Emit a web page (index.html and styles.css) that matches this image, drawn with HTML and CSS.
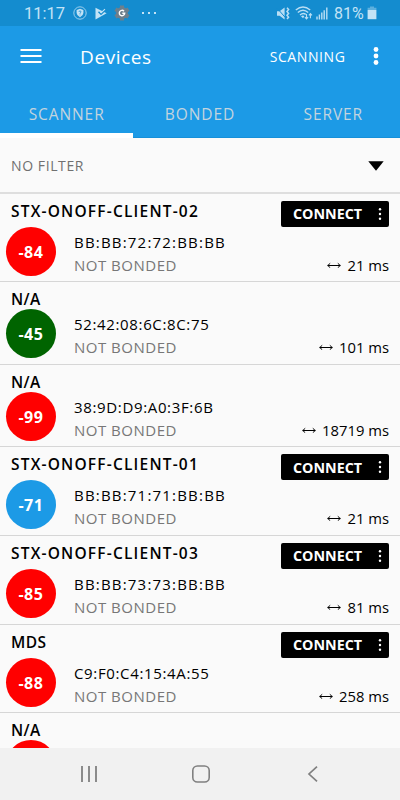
FILE: index.html
```html
<!DOCTYPE html>
<html lang="en">
<head>
  <meta charset="UTF-8" />
  <meta name="viewport" content="width=device-width, initial-scale=1.0"/>
  <title>Devices</title>
  <link rel="stylesheet" href="styles.css">
</head>
<body>
  <div class="status-bar">
    <span class="clock">11:17</span>
    <svg class="icon-shield" width="14" height="14" viewBox="0 0 14 14">
      <circle cx="7" cy="7" r="6.2" fill="none" stroke="#a9d6f1" stroke-width="0.9"/>
      <path d="M7 2.8 L10.4 4 V7 Q10.2 9.7 7 11.3 Q3.8 9.7 3.6 7 V4 Z" fill="#c3e3f6"/>
      <path d="M6 5.9 Q6 4.9 7 4.9 Q8.1 4.9 8 6 Q7.9 6.6 7 7 V7.7 M7 8.6 V9.3" fill="none" stroke="#148ccf" stroke-width="0.8"/>
    </svg>
    <svg class="icon-play" width="12" height="13" viewBox="0 0 12 13">
      <path d="M0.5 0.8 L11.6 6.3 L0.5 12.4 Z" fill="#c3e3f6"/>
      <path d="M3.5 4.8 L6 7.2 L11 2.4" fill="none" stroke="#148ccf" stroke-width="1.5"/>
      <path d="M5 4.4 L6.2 5.7 L10 2.2" fill="none" stroke="#c3e3f6" stroke-width="1.1"/>
    </svg>
    <svg class="icon-gear" width="16" height="16" viewBox="0 0 16 16">
      <circle cx="8" cy="8" r="6" fill="#6d7f8c"/>
      <path d="M8 0.4 V15.6 M1.4 4.2 L14.6 11.8 M1.4 11.8 L14.6 4.2" stroke="#6d7f8c" stroke-width="4"/>
      <path d="M10 6.2 A2.7 2.7 0 1 0 10.7 8.2 H8.3" fill="none" stroke="#fff" stroke-width="1.4"/>
    </svg>
    <svg class="icon-more" width="14" height="4" viewBox="0 0 14 4">
      <path d="M0 1h2v2h-2z M6 1h2v2h-2z M12 1h2v2h-2z" fill="#c3e3f6"/>
    </svg>
    <span class="spacer"></span>
    <svg class="icon-mute" width="14" height="13" viewBox="0 0 14 13">
      <path d="M1 4.2 H3.6 L8.6 0.6 V12.4 L3.6 8.8 H1 Z" fill="#b9def4"/>
      <path d="M0.6 0.6 L9 10.2" stroke="#148ccf" stroke-width="1"/>
      <path d="M11 0.8 l1.6 1.8 l-1.6 1.9 l1.6 1.9 l-1.6 1.9 l1.6 1.9 l-1.6 1.9" fill="none" stroke="#b9def4" stroke-width="1.5"/>
    </svg>
    <svg class="icon-wifi" width="18" height="14" viewBox="0 0 18 14">
      <path d="M0.8 4 Q8 -2 15.2 4 M2.8 6.6 Q8 2 13.2 6.6 M5 9 Q8 6.4 10.8 8.4" fill="none" stroke="#b9def4" stroke-width="1.4"/>
      <path d="M6 10.2 Q8 8.8 9.4 10.2 L8 12.2 Z" fill="#b9def4"/>
      <path d="M11.5 8 V12.8 M9.9 11.2 L11.5 12.9 L13.1 11.2 M15.4 12.3 V7.8 M13.9 9.4 L15.4 7.6 L17 9.4" fill="none" stroke="#b9def4" stroke-width="1.1"/>
    </svg>
    <svg class="icon-signal" width="12" height="13" viewBox="0 0 12 13">
      <path d="M1 9.5V12.4 M3.4 7.6V12.4 M5.8 5.4V12.4 M8.2 3.2V12.4 M10.8 0.6V12.4" stroke="#b9def4" stroke-width="1.4"/>
    </svg>
    <span class="percent">81%</span>
    <svg class="icon-battery" width="10" height="14" viewBox="0 0 10 14">
      <path d="M3 0.4h4v1.3h2.4v2.3H0.6V1.7H3z" fill="#5db0de"/>
      <path d="M0.6 4h8.8v9.2H0.6z" fill="#c3e3f6"/>
    </svg>
  </div>

  <header class="app-bar">
    <svg class="menu" width="22" height="14" viewBox="0 0 22 14">
      <path d="M0.5 1h21 M0.5 7h21 M0.5 13h21" stroke="#fff" stroke-width="2"/>
    </svg>
    <h1>Devices</h1>
    <span class="scanning">SCANNING</span>
    <svg class="overflow" width="6" height="20" viewBox="0 0 6 20" fill="#fff">
      <circle cx="3" cy="3.5" r="2.4"/>
      <circle cx="3" cy="10" r="2.4"/>
      <circle cx="3" cy="16.5" r="2.4"/>
    </svg>
  </header>

  <nav class="tabs">
    <span class="tab active">SCANNER</span>
    <span class="tab">BONDED</span>
    <span class="tab">SERVER</span>
  </nav>

  <div class="filter">
    <span>NO FILTER</span>
    <svg width="16" height="10" viewBox="0 0 16 10"><path d="M0.3 0.2h15.4L8 9.8z"/></svg>
  </div>

  <main class="devices" id="devices"></main>

  <footer class="nav-bar">
    <svg width="18" height="18" viewBox="0 0 18 18">
      <path d="M2 1v16 M9 1v16 M16 1v16" stroke="#808080" stroke-width="1.8"/>
    </svg>
    <svg width="20" height="20" viewBox="0 0 20 20">
      <rect x="1.8" y="2" width="16.4" height="16" rx="4.6" fill="none" stroke="#808080" stroke-width="1.6"/>
    </svg>
    <svg width="12" height="18" viewBox="0 0 12 18">
      <path d="M10 1.6 L2 9 L10 16.4" fill="none" stroke="#808080" stroke-width="1.7"/>
    </svg>
  </footer>

  <script>
    const devices = [
      { name: "STX-ONOFF-CLIENT-02", rssi: -84, color: "red", mac: "BB:BB:72:72:BB:BB", interval: 21, connect: true },
      { name: "N/A", rssi: -45, color: "green", mac: "52:42:08:6C:8C:75", interval: 101 },
      { name: "N/A", rssi: -99, color: "red", mac: "38:9D:D9:A0:3F:6B", interval: 18719 },
      { name: "STX-ONOFF-CLIENT-01", rssi: -71, color: "blue", mac: "BB:BB:71:71:BB:BB", interval: 21, connect: true },
      { name: "STX-ONOFF-CLIENT-03", rssi: -85, color: "red", mac: "BB:BB:73:73:BB:BB", interval: 81, connect: true },
      { name: "MDS", rssi: -88, color: "red", mac: "C9:F0:C4:15:4A:55", interval: 258, connect: true },
      { name: "N/A", color: "red" }
    ];

    const connectButton = `
      <button class="connect">
        <span>CONNECT</span>
        <svg width="4" height="14" viewBox="0 0 4 14" fill="#fff">
          <circle cx="2" cy="2.3" r="1.2"/><circle cx="2" cy="7" r="1.2"/><circle cx="2" cy="11.7" r="1.2"/>
        </svg>
      </button>`;

    const arrow = `
      <svg width="14" height="6" viewBox="0 0 14 6">
        <path d="M0.5 3.5h13 M3.2 1.3L0.8 3.5l2.4 2.2 M10.8 1.3L13.2 3.5l-2.4 2.2" fill="none" stroke="#000" stroke-width="1"/>
      </svg>`;

    document.getElementById("devices").innerHTML = devices.map(d => `
      <section class="device ${d.connect ? "tall" : ""} ${d.name.startsWith("STX") ? "stx" : ""}">
        <div class="head">
          <span class="name">${d.name}</span>
          ${d.connect ? connectButton : ""}
        </div>
        <div class="body">
          <span class="rssi ${d.color}">${d.rssi || ""}</span>
          ${d.mac ? `
          <div class="info">
            <span class="mac">${d.mac}</span>
            <span class="bond">NOT BONDED</span>
          </div>
          <div class="interval">${arrow}<span>${d.interval} ms</span></div>` : ""}
        </div>
      </section>`).join("");
  </script>
</body>
</html>
```
FILE: styles.css
```css
* {
  box-sizing: border-box;
}
body {
  margin: 0;
  height: 800px;
  display: flex;
  flex-direction: column;
  overflow: hidden;
  background: #fafafa;
  color: #000;
  font-family: "Open Sans", sans-serif;
}
svg {
  display: block;
  flex: none;
}
.status-bar {
  flex: none;
  height: 26px;
  display: flex;
  align-items: center;
  padding: 0 23px 0 24px;
  background: #148ccf;
  color: #c3e3f6;
  font-family: Roboto, sans-serif;
  font-size: 16.5px;
}
.clock {
  width: 40px;
  margin-right: 9px;
}
.icon-play {
  margin-left: 8px;
}
.icon-gear {
  margin-left: 7px;
}
.icon-more {
  margin-left: 12px;
}
.spacer {
  flex: 1;
}
.icon-wifi {
  margin-left: 5px;
}
.icon-signal {
  margin: 0 6px 0 3px;
}
.percent {
  width: 31px;
  margin-right: 2px;
  font-size: 16px;
}
.app-bar {
  flex: none;
  height: 64px;
  display: flex;
  align-items: center;
  padding: 0 21.5px 4px 20px;
  background: #1c9ae6;
  color: #fff;
}
.app-bar h1 {
  flex: 1;
  margin: 2px 0 0 38px;
  font-size: 19px;
  font-weight: 400;
  letter-spacing: 0.6px;
}
.scanning {
  margin: 1px 27px 0 0;
  font-size: 14px;
  letter-spacing: 0.6px;
}
.tabs {
  flex: none;
  height: 48px;
  display: grid;
  grid-template-columns: repeat(3, 1fr);
  background: #1c9ae6;
  color: #c3d4de;
  font-size: 15.5px;
  letter-spacing: 0.9px;
}
.tab {
  display: flex;
  align-items: center;
  justify-content: center;
  border-bottom: 1px solid #1690d9;
}
.tab.active {
  border-bottom: 5px solid #fff;
  padding-top: 4px;
}
.filter {
  flex: none;
  height: 55.6px;
  display: flex;
  align-items: center;
  justify-content: space-between;
  padding: 2px 16px 0 11px;
  border-bottom: 2px solid #dedede;
  color: #707070;
  font-size: 14px;
  letter-spacing: 0.6px;
}
.devices {
  flex: 1;
  min-height: 0;
  overflow: hidden;
}
.device {
  height: 82.6px;
  border-bottom: 1px solid #d6d6d6;
}
.device.tall {
  height: 88.6px;
}
.head {
  height: 27px;
  display: flex;
  align-items: flex-start;
  justify-content: space-between;
  padding: 7px 11px 0;
}
.tall .head {
  height: 33px;
}
.name {
  font-size: 15.5px;
  line-height: 21px;
  font-weight: 600;
  letter-spacing: 0.4px;
}
.stx .name {
  letter-spacing: 1.2px;
}
.connect {
  width: 108px;
  height: 26px;
  display: flex;
  align-items: center;
  justify-content: space-between;
  padding: 0 7px 0 12px;
  border: none;
  border-radius: 2px;
  background: #000;
  color: #fff;
  font: 700 14.3px "Open Sans", sans-serif;
}
.body {
  height: 49px;
  display: flex;
  padding: 0 11px 0 6px;
}
.rssi {
  flex: none;
  width: 50px;
  height: 49px;
  border-radius: 50%;
  color: #fff;
  font-size: 16px;
  font-weight: 700;
  line-height: 50px;
  text-align: center;
  letter-spacing: 0.6px;
}
.red {
  background: #ff0000;
}
.green {
  background: #006400;
}
.blue {
  background: #1c9ae6;
}
.info {
  flex: 1;
  margin-left: 18px;
  padding-top: 4px;
  font-size: 15px;
  line-height: 23px;
}
.info span {
  display: block;
}
.mac {
  letter-spacing: 0.65px;
}
.stx .mac {
  letter-spacing: 1.2px;
}
.bond {
  color: #777;
  letter-spacing: 0.5px;
}
.interval {
  align-self: flex-end;
  display: flex;
  align-items: center;
  gap: 6px;
  font-size: 14.8px;
  line-height: 22px;
}
.nav-bar {
  flex: none;
  height: 52px;
  display: grid;
  grid-template-columns: 178px 46px 178px;
  justify-content: center;
  justify-items: center;
  align-items: center;
  padding-left: 2px;
  background: #f1f1f1;
}
```
